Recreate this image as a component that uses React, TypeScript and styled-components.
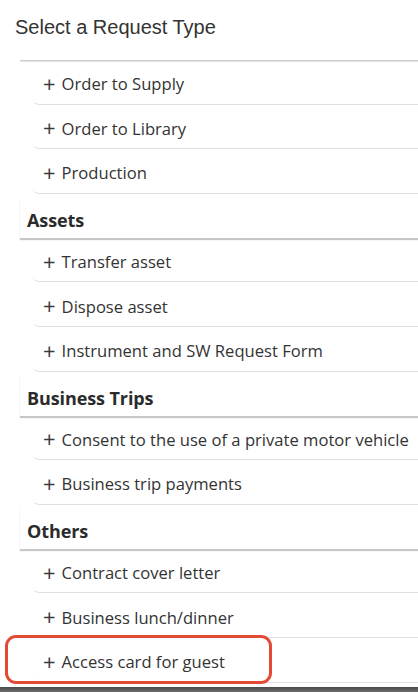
import React from "react";
import styled, { createGlobalStyle } from "styled-components";

type Group = {
  title?: string;
  items: string[];
};

const groups: Group[] = [
  { items: ["Order to Supply", "Order to Library", "Production"] },
  {
    title: "Assets",
    items: ["Transfer asset", "Dispose asset", "Instrument and SW Request Form"],
  },
  {
    title: "Business Trips",
    items: ["Consent to the use of a private motor vehicle", "Business trip payments"],
  },
  {
    title: "Others",
    items: ["Contract cover letter", "Business lunch/dinner", "Access card for guest"],
  },
];

const highlighted = "Access card for guest";

const GlobalStyle = createGlobalStyle`
  html, body {
    margin: 0;
    padding: 0;
    background: #ffffff;
    overflow: hidden;
  }
  * {
    box-sizing: border-box;
  }
`;

const Panel = styled.div`
  width: 418px;
  height: 692px;
  display: flex;
  flex-direction: column;
  background: #ffffff;
  overflow: hidden;
  position: relative;
`;

const Title = styled.div`
  height: 60px;
  flex: 0 0 60px;
  display: flex;
  align-items: center;
  padding: 0 0 6px 15px;
  font-family: "Liberation Sans", Arial, sans-serif;
  font-size: 20px;
  color: #333333;
  background: #ffffff;
`;

const List = styled.div`
  flex: 1;
  display: flex;
  flex-direction: column;
  padding-left: 20px;
  position: relative;
  &::before {
    content: "";
    position: absolute;
    top: 0;
    left: 20px;
    right: 0;
    height: 2px;
    background: linear-gradient(#c4c4c4, #ececec);
  }
`;

const GroupTitle = styled.div`
  height: 41px;
  margin-top: 3px;
  display: flex;
  align-items: center;
  padding: 5px 0 0 7px;
  font-family: "Open Sans", "Noto Sans", sans-serif;
  font-weight: 700;
  font-size: 18px;
  letter-spacing: -0.1px;
  color: #2b2b2b;
  background: #ffffff;
  box-shadow: 0 2px 1px rgba(0, 0, 0, 0.22);
  position: relative;
  z-index: 1;
`;

const Item = styled.div`
  height: 44.6px;
  margin-left: 13px;
  display: flex;
  align-items: center;
  padding: 4px 0 0 10px;
  font-family: "Open Sans", "Noto Sans", sans-serif;
  font-size: 16.6px;
  white-space: nowrap;
  color: #333333;
  border-bottom: 1px solid #e0e0e0;
  border-bottom-left-radius: 6px;
  position: relative;
`;

const Plus = styled.span`
  margin-right: 6px;
  margin-top: -2px;
  font-size: 22px;
  line-height: 1;
  color: #3a3a3a;
`;

const Highlight = styled.div`
  position: absolute;
  left: -28px;
  top: -3px;
  width: 267px;
  height: 49px;
  border: 3px solid #e24a35;
  border-radius: 11px;
  pointer-events: none;
`;

const BottomBar = styled.div`
  position: absolute;
  left: 0;
  right: 0;
  bottom: 0;
  height: 5px;
  background: linear-gradient(#4a4a4a, #6e6e6e);
`;

export default function App() {
  return (
    <Panel>
      <GlobalStyle />
      <Title>Select a Request Type</Title>
      <List>
        {groups.map((group, gi) => (
          <React.Fragment key={gi}>
            {group.title && <GroupTitle>{group.title}</GroupTitle>}
            {group.items.map((item) => (
              <Item key={item}>
                <Plus>+</Plus>
                {item}
                {item === highlighted && <Highlight />}
              </Item>
            ))}
          </React.Fragment>
        ))}
      </List>
      <BottomBar />
    </Panel>
  );
}
